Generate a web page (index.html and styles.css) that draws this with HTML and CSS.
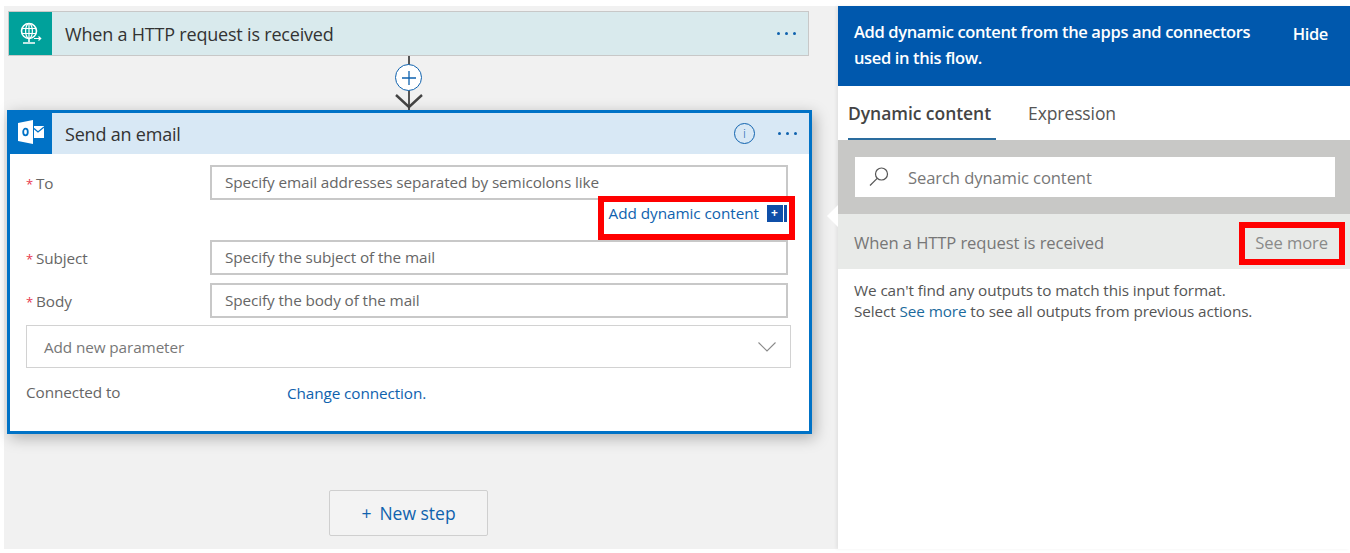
FILE: index.html
```html
<!DOCTYPE html>
<html lang="en">
<head>
    <meta charset="UTF-8">
    <title>Send an email - Dynamic content</title>
    <link rel="stylesheet" href="styles.css">
</head>
<body>
    <div class="page">
        <div class="canvas">
            <div class="trigger">
                <div class="trigger-icon">
                    <svg width="24" height="26" viewBox="0 0 24 26" fill="none" stroke="#fff" stroke-width="1.2">
                        <circle cx="10" cy="10" r="7.5" stroke-width="1.6"/>
                        <ellipse cx="10" cy="10" rx="3.4" ry="7.5"/>
                        <path d="M3 7.5h14M3 12.5h14M10 2.5v15"/>
                        <path d="M10 18v3M4 22h12" stroke-width="1.6"/>
                        <path d="M15 17.5h6M19.5 15.5l2.2 2-2.2 2"/>
                    </svg>
                </div>
                <div class="card-title">When a HTTP request is received</div>
                <div class="dots"><i></i><i></i><i></i></div>
            </div>

            <div class="connector">
                <div class="plus">
                    <svg width="14" height="14" viewBox="0 0 14 14" stroke="#0f62ae" stroke-width="1.3"><path d="M7 0v14M0 7h14"/></svg>
                </div>
                <svg class="arrow" width="28" height="17" viewBox="0 0 28 17" fill="none" stroke="#444" stroke-width="2.4"><path d="M1 3l13 12L27 3"/></svg>
            </div>

            <div class="action">
                <div class="action-head">
                    <div class="action-icon">
                        <svg width="27" height="24" viewBox="0 0 27 24">
                            <path fill="#fff" d="M0 3L15 0v24L0 21z"/>
                            <rect x="16" y="6" width="10" height="12" fill="#fff"/>
                            <path d="M16 8.500l4 3.500 6-5" fill="none" stroke="#0072c6" stroke-width="1.300"/>
                            <ellipse cx="7.500" cy="12" rx="2.300" ry="3.300" fill="none" stroke="#0072c6" stroke-width="1.800"/>
                        </svg>
                    </div>
                    <div class="card-title">Send an email</div>
                    <div class="info">i</div>
                    <div class="dots"><i></i><i></i><i></i></div>
                </div>
                <div class="form">
                    <div class="field">
                        <label><span class="req">*</span>To</label>
                        <div class="input">Specify email addresses separated by semicolons like</div>
                    </div>
                    <div class="dyn-row">
                        <a class="link dyn-link">Add dynamic content</a>
                        <span class="dyn-btn">+</span>
                        <div class="annot annot-dyn"></div>
                    </div>
                    <div class="field">
                        <label><span class="req">*</span>Subject</label>
                        <div class="input">Specify the subject of the mail</div>
                    </div>
                    <div class="field">
                        <label><span class="req">*</span>Body</label>
                        <div class="input">Specify the body of the mail</div>
                    </div>
                    <div class="select">
                        <span>Add new parameter</span>
                        <svg width="18" height="10" viewBox="0 0 18 10" fill="none" stroke="#8a8a8a" stroke-width="1.1"><path d="M.5.500L9 9l8.500-8.500"/></svg>
                    </div>
                    <div class="connection">
                        <span class="conn-label">Connected to</span>
                        <a class="link conn-link">Change connection.</a>
                    </div>
                </div>
            </div>

            <button class="new-step"><span class="new-plus">+</span>New step</button>
        </div>

        <div class="panel">
            <div class="caret"></div>
            <div class="panel-head">
                <p>Add dynamic content from the apps and connectors used in this flow.</p>
                <a class="hide">Hide</a>
            </div>
            <div class="tabs">
                <div class="tab active">Dynamic content</div>
                <div class="tab">Expression</div>
            </div>
            <div class="search-band">
                <div class="search">
                    <svg width="22" height="22" viewBox="0 0 22 22" fill="none" stroke="#555" stroke-width="1.200"><circle cx="13.500" cy="8" r="6"/><path d="M9.200 12.300L2 19.500"/></svg>
                    <span>Search dynamic content</span>
                </div>
            </div>
            <div class="section">
                <span>When a HTTP request is received</span>
                <span class="see-more">See more</span>
                <div class="annot annot-see"></div>
            </div>
            <div class="note">
                We can't find any outputs to match this input format.<br>
                Select <a class="link-dark">See more</a> to see all outputs from previous actions.
            </div>
        </div>
    </div>
</body>
</html>
```

FILE: styles.css
```css
* {
    box-sizing: border-box;
}
body {
    margin: 0;
    background-color: #fff;
    font-family: "Open Sans", "Noto Sans", sans-serif;
    color: #444;
    overflow: hidden;
}
.page {
    display: flex;
    height: 553px;
    padding: 6px 0 4px 4px;
}

/* left side, the flow */
.canvas {
    width: 834px;
    background-color: #f1f1f1;
    padding: 5px 0 0 3px;
    display: flex;
    flex-direction: column;
}
.trigger {
    display: flex;
    align-items: center;
    width: 801px;
    height: 45px;
    margin-left: 1px;
    background-color: #d9eaed;
    border: 1px solid #c8c8c8;
}
.trigger-icon {
    width: 43px;
    height: 43px;
    background-color: #00a19b;
    display: flex;
    align-items: center;
    justify-content: center;
    padding-top: 1px;
}
.card-title {
    flex: 1;
    margin-left: 13px;
    font-size: 18px;
    color: #333;
    letter-spacing: -0.2px;
}
.dots {
    display: flex;
    gap: 5px;
    margin-right: 12px;
}
.dots i {
    width: 3px;
    height: 3px;
    background-color: #0f62ae;
    border-radius: 50%;
}
.connector {
    width: 803px;
    height: 54px;
    display: flex;
    flex-direction: column;
    align-items: center;
    background: linear-gradient(#555, #555) center / 2px 100% no-repeat;
}
.plus {
    width: 27px;
    height: 27px;
    margin-top: 8px;
    border-radius: 50%;
    border: 1.500px solid #0f62ae;
    background-color: #fff;
    display: flex;
    align-items: center;
    justify-content: center;
}
.arrow {
    margin-top: 1px;
}
.action {
    width: 805px;
    height: 324px;
    background-color: #fff;
    border: 3px solid #0072c6;
    box-shadow: 3px 4px 14px rgba(0, 0, 0, 0.28);
}
.action-head {
    display: flex;
    align-items: center;
    height: 41px;
    background-color: #d8e8f5;
}
.action-icon {
    width: 42px;
    height: 41px;
    padding-bottom: 3px;
    background-color: #0072c6;
    display: flex;
    align-items: center;
    justify-content: center;
}
.info {
    width: 21px;
    height: 21px;
    margin-right: 23px;
    border: 1.500px solid #0f62ae;
    border-radius: 50%;
    color: #0f62ae;
    font-size: 13px;
    font-weight: 300;
    line-height: 18px;
    text-align: center;
}
.form {
    padding: 11px 20px 0 16px;
    font-size: 15.300px;
    letter-spacing: -0.1px;
}
.field {
    display: flex;
    height: 35px;
    margin-bottom: 8px;
}
.field label {
    width: 184px;
    padding-top: 8px;
    color: #666;
}
.req {
    display: inline-block;
    width: 10px;
    color: #e8384f;
    font-size: 13px;
}
.input {
    flex: 1;
    margin-right: 1px;
    padding-left: 13px;
    line-height: 31px;
    border: 2px solid #c8c8c8;
    color: #666;
    background-color: #fff;
}
.dyn-row {
    display: flex;
    justify-content: flex-end;
    align-items: flex-start;
    height: 40px;
    margin-top: -8px;
    padding-top: 3px;
    position: relative;
}
.link {
    color: #0f62ae;
}
.dyn-link {
    letter-spacing: -0.05px;
}
.dyn-btn {
    width: 20px;
    height: 17px;
    margin-top: 2px;
    margin-left: 8px;
    margin-right: 2px;
    background: linear-gradient(90deg, #0f4fa8 16px, #fff 16px, #fff 17px, #0f4fa8 17px);
    color: #fff;
    font-size: 12px;
    font-weight: 700;
    line-height: 15px;
    padding-left: 4px;
}
.annot {
    position: absolute;
    border: 6px solid #f00;
}
.annot-dyn {
    top: -4px;
    right: -6px;
    width: 197px;
    height: 44px;
}
.select {
    display: flex;
    align-items: center;
    justify-content: space-between;
    width: 765px;
    height: 43px;
    margin-top: -1px;
    padding: 0 14px 0 17px;
    border: 1px solid #d2d2d2;
    color: #777;
}
.connection {
    display: flex;
    margin-top: 14px;
    color: #666;
}
.conn-label {
    width: 261px;
}
.conn-link {
    margin-top: 1px;
}
.new-step {
    align-self: flex-start;
    width: 159px;
    height: 46px;
    margin: 56px 0 0 322px;
    background-color: #f3f3f3;
    border: 1px solid #cfcfcf;
    border-radius: 2px;
    font-family: inherit;
    font-size: 17.500px;
    color: #0f62ae;
}
.new-plus {
    margin-right: 8px;
}

/* right side, dynamic content */
.panel {
    width: 512px;
    position: relative;
    background-color: #fff;
    box-shadow: -2px 0 3px rgba(0, 0, 0, 0.06);
    font-size: 15.300px;
    letter-spacing: -0.1px;
}
.caret {
    position: absolute;
    top: 199px;
    left: -11px;
    border-style: solid;
    border-width: 11px 11px 11px 0;
    border-color: transparent #fff transparent transparent;
}
.panel-head {
    display: flex;
    height: 80px;
    padding: 13px 22px 0 16px;
    background-color: #0058ad;
    color: #fff;
    font-size: 16.500px;
    font-weight: 600;
    letter-spacing: -0.36px;
    line-height: 26px;
}
.panel-head p {
    margin: 0;
    width: 410px;
}
.hide {
    margin-left: auto;
    margin-top: 2px;
}
.tabs {
    display: flex;
    height: 54px;
    padding-left: 10px;
    font-size: 17.500px;
    color: #555;
}
.tab {
    padding: 15px 5px 0 0;
    margin-right: 32px;
}
.tab.active {
    color: #444;
    font-weight: 600;
    letter-spacing: -0.05px;
    border-bottom: 2px solid #2a6c9e;
}
.search-band {
    height: 74px;
    padding: 17px 15px 0 17px;
    background-color: #c8c8c6;
}
.search {
    display: flex;
    align-items: center;
    height: 40px;
    padding-left: 13px;
    background-color: #fff;
    color: #777;
    font-size: 16.600px;
}
.search span {
    margin-left: 18px;
}
.section {
    display: flex;
    align-items: center;
    justify-content: space-between;
    height: 55px;
    padding: 1px 22px 0 16px;
    background-color: #e8eae8;
    color: #777;
    font-size: 16.600px;
    position: relative;
}
.see-more {
    color: #8a8a8a;
}
.annot-see {
    top: 8px;
    right: 5px;
    width: 106px;
    height: 43px;
}
.note {
    padding: 11px 16px;
    line-height: 21px;
    color: #555;
}
.link-dark {
    color: #1c6a9c;
}
```
